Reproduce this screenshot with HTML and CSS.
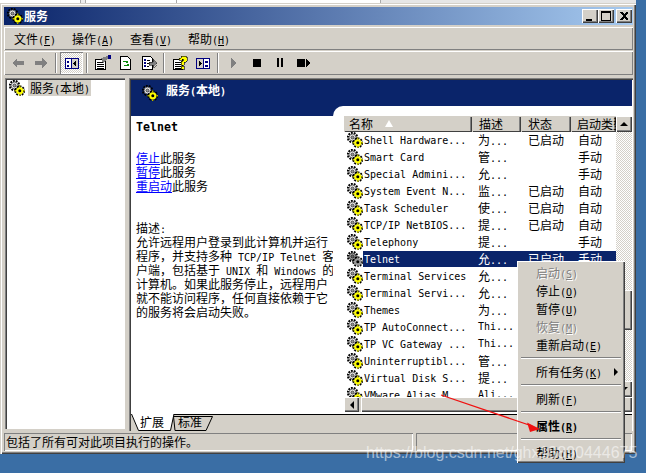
FILE: index.html
```html
<!DOCTYPE html>
<html>
<head>
<meta charset="utf-8"/>
<title>服务</title>
<link rel="stylesheet" href="styles.css">
</head>
<body>

<svg class="defs" width="0" height="0">
  <symbol id="svc" viewBox="0 0 16 16">
    <circle cx="5.5" cy="5.5" r="4.6" fill="none" stroke="#000" stroke-width="2.200" stroke-dasharray="1.800 1"/>
    <circle cx="5.5" cy="5.5" r="3.4" fill="#fff" stroke="#444" stroke-width=".8"/>
    <circle cx="5.5" cy="5.5" r="1.6" fill="#9a9a9a" stroke="#000" stroke-width=".6"/>
    <circle cx="10.8" cy="10.8" r="4.3" fill="none" stroke="#000" stroke-width="2.200" stroke-dasharray="1.800 1"/>
    <circle cx="10.8" cy="10.8" r="3.6" fill="#ff0"/>
    <circle cx="10.8" cy="10.8" r="1.5" fill="#000"/>
    <path d="M10.800 5.500v1.500M10.800 14.500v1.500M5.500 10.800h1.500M14.500 10.800h1.500" stroke="#ff0" stroke-width="1"/>
  </symbol>
</svg>

<div class="strip"></div>

<div class="window">
  <div class="titlebar">
    <svg class="ico"><use href="#svc"/></svg>
    <b class="title-text">服务</b>
    <div class="winbtns">
      <span class="winbtn raised"><svg width="16" height="14" shape-rendering="crispEdges"><rect x="4" y="10" width="6" height="2"/></svg></span>
      <span class="winbtn raised"><svg width="16" height="14" shape-rendering="crispEdges"><path d="M3 2h10v10H3z M4 4v7h8V4z" fill-rule="evenodd"/></svg></span>
      <span class="winbtn close raised"><svg width="16" height="14" shape-rendering="crispEdges"><path d="M4 3h2l2 2 2-2h2v1l-3 3 3 3v1h-2l-2-2-2 2H4v-1l3-3-3-3z"/></svg></span>
    </div>
  </div>

  <div class="menubar bar">
    <span class="menu-item">文件<span class="en">(<u>F</u>)</span></span>
    <span class="menu-item">操作<span class="en">(<u>A</u>)</span></span>
    <span class="menu-item">查看<span class="en">(<u>V</u>)</span></span>
    <span class="menu-item">帮助<span class="en">(<u>H</u>)</span></span>
  </div>

  <div class="toolbar bar">
    <span class="tool"><svg width="16" height="16" shape-rendering="crispEdges"><path d="M2 8l5-5v3h7v4H7v3z" fill="#808080"/></svg></span>
    <span class="tool"><svg width="16" height="16" shape-rendering="crispEdges"><path d="M14 8L9 3v3H2v4h7v3z" fill="#808080"/></svg></span>
    <span class="tool-sep"></span>
    <span class="tool on"><svg width="16" height="16" shape-rendering="crispEdges"><rect x="1.5" y="3.5" width="13" height="10" fill="#d4d0c8" stroke="#000080"/><rect x="2" y="4" width="5" height="9" fill="#fff"/><rect x="7" y="3" width="1" height="10" fill="#000080"/><path d="M3 6h2v2H3zM3 10h2v2H3z" fill="#000080"/><path d="M12 5v7L9 8.5z"/></svg></span>
    <span class="tool-sep"></span>
    <span class="tool"><svg width="18" height="16" shape-rendering="crispEdges"><path d="M1.500 4.500h10v10h-10z" fill="#fff" stroke="#000"/><path d="M3 7h7M3 9h7M3 11h7M3 13h7" stroke="#000"/><path d="M7 3l7-2v3l-5 4z" fill="#808080"/><rect x="14" y="0" width="3" height="4" fill="#000080"/></svg></span>
    <span class="tool"><svg width="16" height="16" shape-rendering="crispEdges"><path d="M2.5 1.5h7l3 3v10h-10z" fill="#fff" stroke="#000"/><path d="M5 6h5v2H8L7 7H5zM6 11h5V9H9l-1 1H6z" fill="#0a8a0a"/></svg></span>
    <span class="tool"><svg width="16" height="16" shape-rendering="crispEdges"><path d="M1.500 1.500h8l2 2v11h-10z" fill="#fff" stroke="#000"/><path d="M3 4h2v2H3zM3 7h2v2H3zM3 10h2v2H3z" fill="#000080"/><path d="M6 5h3M6 8h2M6 11h2" stroke="#000"/><path d="M8 7h4V4l4 4.500-4 4.500v-3H8z" fill="#808080" stroke="#000" stroke-width=".5"/></svg></span>
    <span class="tool-sep"></span>
    <span class="tool"><svg width="16" height="16" shape-rendering="crispEdges"><path d="M1.500 4.500h9v10h-9z" fill="#fff" stroke="#000"/><path d="M3 7h6M3 9h6M3 11h6M3 13h6" stroke="#000"/><path d="M7 3h2V1h5v1h1v4h-1v1h-2v3H9V6h2V4h-1v1H7z" fill="#ff0" stroke="#000" stroke-width=".6"/><rect x="9" y="11" width="3" height="3" fill="#ff0" stroke="#000" stroke-width=".6"/></svg></span>
    <span class="tool"><svg width="16" height="16" shape-rendering="crispEdges"><rect x="1.500" y="3.500" width="13" height="10" fill="#fff" stroke="#000080"/><rect x="2" y="4" width="6" height="9" fill="#d4d0c8"/><rect x="8" y="3" width="1" height="10" fill="#000080"/><path d="M4 5v7l3-3.500z"/><path d="M10 6h3v2h-3zM10 10h3v2h-3z" fill="#000080"/></svg></span>
    <span class="tool-sep"></span>
    <span class="tool"><svg width="16" height="16" shape-rendering="crispEdges"><path d="M5 3l6 5-6 5z" fill="#808080"/></svg></span>
    <span class="tool"><svg width="16" height="16" shape-rendering="crispEdges"><rect x="4" y="4" width="8" height="8"/></svg></span>
    <span class="tool"><svg width="16" height="16" shape-rendering="crispEdges"><path d="M5 3h2v9H5zM9 3h2v9H9z"/></svg></span>
    <span class="tool"><svg width="16" height="16" shape-rendering="crispEdges"><path d="M2 4h8v8H2zM11 4l4 4-4 4z"/></svg></span>
  </div>

  <div class="panes">
    <div class="tree sunken">
      <svg class="ico"><use href="#svc"/></svg>
      <span class="tree-label">服务<span class="en">(</span>本地<span class="en">)</span></span>
    </div>

    <div class="main sunken">
      <div class="ext-head">
        <svg class="ico"><use href="#svc"/></svg>
        <b>服务<span class="en">(</span>本地<span class="en">)</span></b>
      </div>
      <div class="ext-body">
        <div class="details">
          <div class="notch"></div>
          <div class="svc-name">Telnet</div>
          <div class="actions">
            <div><a>停止</a>此服务</div>
            <div><a>暂停</a>此服务</div>
            <div><a>重启动</a>此服务</div>
          </div>
          <div class="desc">
            描述<span class="en">:</span><br>
            允许远程用户登录到此计算机并运行<br>
            程序，并支持多种<span class="en"> TCP/IP Telnet </span>客<br>
            户端，包括基于<span class="en"> UNIX </span>和<span class="en"> Windows </span>的<br>
            计算机。如果此服务停止，远程用户<br>
            就不能访问程序，任何直接依赖于它<br>
            的服务将会启动失败。
          </div>
        </div>

        <div class="listwrap">
          <div class="listinner">
            <div class="list">
              <div class="listmain">
                <div class="head">
                  <span class="h h-name raised">名称<i class="sort"></i></span>
                  <span class="h h-desc raised">描述</span>
                  <span class="h h-stat raised">状态</span>
                  <span class="h h-start raised">启动类型</span>
                </div>
                <div class="row"><svg class="ico"><use href="#svc"/></svg><div class="cells"><span class="c-name">Shell Hardware...</span><span class="c-desc">为<span class="en">...</span></span><span class="c-stat">已启动</span><span class="c-start">自动</span></div></div>
                <div class="row"><svg class="ico"><use href="#svc"/></svg><div class="cells"><span class="c-name">Smart Card</span><span class="c-desc">管<span class="en">...</span></span><span class="c-stat"></span><span class="c-start">手动</span></div></div>
                <div class="row"><svg class="ico"><use href="#svc"/></svg><div class="cells"><span class="c-name">Special Admini...</span><span class="c-desc">允<span class="en">...</span></span><span class="c-stat"></span><span class="c-start">手动</span></div></div>
                <div class="row"><svg class="ico"><use href="#svc"/></svg><div class="cells"><span class="c-name">System Event N...</span><span class="c-desc">监<span class="en">...</span></span><span class="c-stat">已启动</span><span class="c-start">自动</span></div></div>
                <div class="row"><svg class="ico"><use href="#svc"/></svg><div class="cells"><span class="c-name">Task Scheduler</span><span class="c-desc">使<span class="en">...</span></span><span class="c-stat">已启动</span><span class="c-start">自动</span></div></div>
                <div class="row"><svg class="ico"><use href="#svc"/></svg><div class="cells"><span class="c-name">TCP/IP NetBIOS...</span><span class="c-desc">提<span class="en">...</span></span><span class="c-stat">已启动</span><span class="c-start">自动</span></div></div>
                <div class="row"><svg class="ico"><use href="#svc"/></svg><div class="cells"><span class="c-name">Telephony</span><span class="c-desc">提<span class="en">...</span></span><span class="c-stat"></span><span class="c-start">手动</span></div></div>
                <div class="row sel"><svg class="ico"><use href="#svc"/></svg><div class="cells"><span class="c-name">Telnet</span><span class="c-desc">允<span class="en">...</span></span><span class="c-stat">已启动</span><span class="c-start">手动</span></div></div>
                <div class="row"><svg class="ico"><use href="#svc"/></svg><div class="cells"><span class="c-name">Terminal Services</span><span class="c-desc">允<span class="en">...</span></span><span class="c-stat"></span><span class="c-start"></span></div></div>
                <div class="row"><svg class="ico"><use href="#svc"/></svg><div class="cells"><span class="c-name">Terminal Servi...</span><span class="c-desc">允<span class="en">...</span></span><span class="c-stat"></span><span class="c-start"></span></div></div>
                <div class="row"><svg class="ico"><use href="#svc"/></svg><div class="cells"><span class="c-name">Themes</span><span class="c-desc">为<span class="en">...</span></span><span class="c-stat"></span><span class="c-start"></span></div></div>
                <div class="row"><svg class="ico"><use href="#svc"/></svg><div class="cells"><span class="c-name">TP AutoConnect...</span><span class="c-desc en">Thi...</span><span class="c-stat"></span><span class="c-start"></span></div></div>
                <div class="row"><svg class="ico"><use href="#svc"/></svg><div class="cells"><span class="c-name">TP VC Gateway ...</span><span class="c-desc en">Thi...</span><span class="c-stat"></span><span class="c-start"></span></div></div>
                <div class="row"><svg class="ico"><use href="#svc"/></svg><div class="cells"><span class="c-name">Uninterruptibl...</span><span class="c-desc">管<span class="en">...</span></span><span class="c-stat"></span><span class="c-start"></span></div></div>
                <div class="row"><svg class="ico"><use href="#svc"/></svg><div class="cells"><span class="c-name">Virtual Disk S...</span><span class="c-desc">提<span class="en">...</span></span><span class="c-stat"></span><span class="c-start"></span></div></div>
                <div class="row"><svg class="ico"><use href="#svc"/></svg><div class="cells"><span class="c-name">VMware Alias M...</span><span class="c-desc en">Ali...</span><span class="c-stat"></span><span class="c-start"></span></div></div>
              </div>
              <div class="vscroll">
                <span class="sbtn raised"><i class="tri-up"></i></span>
                <span class="track t1"></span>
                <span class="thumb raised"></span>
                <span class="track"></span>
                <span class="sbtn raised"><i class="tri-down"></i></span>
              </div>
              <div class="hscroll">
                <span class="sbtn raised"><i class="tri-left"></i></span>
                <span class="hthumb raised"></span>
              </div>
            </div>
          </div>
        </div>
      </div>
      <div class="tabs">
        <svg class="tabshape" width="90" height="17" font-family="Noto Sans CJK SC" font-size="12">
          <path d="M42.500 2.500H81.500L75 16.500H44z" fill="#d4d0c8" stroke="#000"/>
          <path d="M0 0L7.500 16.500H39.500L43 0z" fill="#fff"/>
          <path d="M.5 0L7.500 16.500H39.500L43 0" fill="none" stroke="#000"/>
          <text x="9" y="12.500">扩展</text>
          <text x="47" y="12.500">标准</text>
        </svg>
      </div>
    </div>
  </div>

  <div class="statusbar">
    <span class="st st-main">包括了所有可对此项目执行的操作。</span>
    <span class="st st-rest"></span>
  </div>
</div>

<div class="ctx">
  <div class="mi off">启动<span class="en">(<u>S</u>)</span></div>
  <div class="mi">停止<span class="en">(<u>O</u>)</span></div>
  <div class="mi">暂停<span class="en">(<u>U</u>)</span></div>
  <div class="mi off">恢复<span class="en">(<u>M</u>)</span></div>
  <div class="mi">重新启动<span class="en">(<u>E</u>)</span></div>
  <div class="msep"></div>
  <div class="mi">所有任务<span class="en">(<u>K</u>)</span><i class="tri-right"></i></div>
  <div class="msep"></div>
  <div class="mi">刷新<span class="en">(<u>F</u>)</span></div>
  <div class="msep"></div>
  <div class="mi strong">属性<span class="en">(<u>R</u>)</span></div>
  <div class="msep"></div>
  <div class="mi">帮助<span class="en">(<u>H</u>)</span></div>
</div>

<svg class="callout" width="110" height="40">
  <path d="M1 1L92 32" stroke="#f01010" stroke-width="1.200" fill="none"/>
  <path d="M100 35L87 28.500L90 38z" fill="#f01010"/>
</svg>

<div class="watermark">https://blog.csdn.net/ghx18890444675</div>

</body>
</html>
```

FILE: styles.css
```css
html, body {
  margin: 0;
  height: 473px;
  overflow: hidden;
}

body {
  background-color: #3a6ea5;
  font-family: "Noto Sans CJK SC", sans-serif;
  font-size: 12px;
  line-height: 14px;
  color: #000;
  position: relative;
}

.defs {
  display: block;
  height: 0;
}

.en {
  font-family: "DejaVu Sans Mono", monospace;
  font-size: 10px;
  line-height: 1;
}

.ico {
  width: 16px;
  height: 16px;
  flex: none;
}

.raised {
  background-color: #d4d0c8;
  box-shadow: inset 1px 1px 0 #fff, inset -1px -1px 0 #404040, inset -2px -2px 0 #808080;
}

.sunken {
  box-shadow: inset 1px 1px 0 #808080, inset 2px 2px 0 #404040, inset -1px -1px 0 #fff;
}

.strip {
  width: 636px;
  height: 3px;
  background: linear-gradient(90deg, #fff 80px, #aaa 80px, #aaa 81px, #eee 81px, #eee 85px, #aaa 85px, #aaa 86px, #fff 86px, #fff 176px, #aaa 176px, #aaa 177px, #fff 177px, #fff 380px, #aaa 380px, #aaa 381px, #e6e6e6 381px);
}

.window {
  width: 636px;
  height: 451px;
  box-sizing: border-box;
  padding: 4px 3px 3px 4px;
  background-color: #d4d0c8;
  box-shadow: inset 1px 1px 0 #d4d0c8, inset 2px 2px 0 #fff, inset -1px -1px 0 #404040, inset -2px -2px 0 #808080;
  display: flex;
  flex-direction: column;
}

/* title bar */
.titlebar {
  height: 18px;
  flex: none;
  display: flex;
  align-items: center;
  padding-left: 3px;
  background: linear-gradient(90deg, #0a246a, #a6caf0);
  color: #fff;
}

.title-text {
  margin-left: 1px;
}

.winbtns {
  margin-left: auto;
  margin-right: 1px;
  display: flex;
}

.winbtn {
  display: block;
  width: 16px;
  height: 14px;
}

.winbtn svg {
  display: block;
}

.close {
  margin-left: 2px;
}

/* menu and toolbar */
.bar {
  flex: none;
  display: flex;
  align-items: center;
  box-shadow: inset 1px 1px 0 #fff, inset -1px -1px 0 #808080;
}

.menubar {
  height: 23px;
  margin-top: 2px;
  padding-left: 10px;
}

.menu-item {
  width: 58px;
}

.toolbar {
  height: 24px;
  margin-top: 1px;
  padding-left: 2px;
}

.tool {
  width: 23px;
  height: 22px;
  display: flex;
  align-items: center;
  justify-content: center;
}

.tool svg {
  display: block;
}

.tool.on {
  background: repeating-conic-gradient(#fff 0 25%, #d4d0c8 0 50%) 0 0 / 2px 2px;
  box-shadow: inset 1px 1px 0 #808080, inset -1px -1px 0 #fff;
}

.tool-sep {
  width: 8px;
  height: 20px;
  background: linear-gradient(90deg, transparent 3px, #808080 3px, #808080 4px, #fff 4px, #fff 5px, transparent 5px);
}

/* panes */
.panes {
  flex: 1;
  min-height: 0;
  margin-top: 3px;
  display: flex;
  gap: 4px;
}

.tree {
  width: 120px;
  margin-left: 1px;
  height: 351px;
  box-sizing: border-box;
  padding: 2px 0 0 4px;
  background-color: #fff;
  display: flex;
  align-items: flex-start;
}

.tree-label {
  margin-left: 3px;
  padding: 1px 1px 1px 2px;
  background-color: #d4d0c8;
  white-space: nowrap;
}

.main {
  flex: 1;
  min-width: 0;
  box-sizing: border-box;
  padding: 2px 1px 0 2px;
  display: flex;
  flex-direction: column;
}

.ext-head {
  height: 26px;
  flex: none;
  box-sizing: border-box;
  padding: 3px 0 0 11px;
  background-color: #0a246a;
  color: #fff;
  display: flex;
  align-items: flex-start;
  gap: 8px;
}

.ext-head .ico {
  margin-top: 2px;
}

.ext-body {
  flex: 1;
  min-height: 0;
  display: flex;
  background-color: #fff;
}

.details {
  width: 202px;
  flex: none;
}

.notch {
  height: 10px;
  background-color: #0a246a;
}

.svc-name {
  margin: 4px 0 0 5px;
  font-family: "DejaVu Sans Mono", monospace;
  font-size: 11.600px;
  font-weight: 700;
}

.actions {
  margin: 17px 0 0 5px;
}

.actions a {
  color: #0000ff;
  text-decoration: underline;
}

.desc {
  margin: 28px 0 0 5px;
  white-space: nowrap;
}

.listwrap {
  flex: 1;
  min-width: 0;
  background-color: #0a246a;
}

.listinner {
  height: 100%;
  box-sizing: border-box;
  padding: 10px 0 2px 11px;
  background-color: #fff;
  border-top-left-radius: 10px;
}

.list {
  height: 100%;
  display: grid;
  grid-template-columns: 1fr 16px;
  grid-template-rows: 1fr 15px;
  min-height: 0;
}

.listmain {
  overflow: hidden;
  min-height: 0;
}

.head {
  height: 16px;
  display: flex;
}

.h {
  height: 16px;
  box-sizing: border-box;
  padding: 1px 0 0 5px;
  overflow: hidden;
  white-space: nowrap;
  box-shadow: inset 1px 1px 0 #d4d0c8, inset -1px -1px 0 #404040, inset -2px 0 0 #808080;
}

.h-name { width: 128px; position: relative; }
.h-desc { width: 49px; padding-left: 7px; }
.h-stat { width: 50px; padding-left: 7px; }
.h-start { width: 45px; padding-left: 6px; }

.sort {
  position: absolute;
  left: 41px;
  top: 4px;
  width: 0;
  height: 0;
  border-left: 4px solid transparent;
  border-right: 4px solid transparent;
  border-bottom: 7px solid #fff;
}

.row {
  height: 17px;
  display: flex;
  padding-left: 3px;
}

.cells {
  flex: 1;
  height: 16px;
  display: flex;
  align-items: center;
  white-space: nowrap;
}

.sel .cells {
  background-color: #0a246a;
  color: #fff;
}

.sel .ico {
  filter: grayscale(1) brightness(.65);
}

.c-name {
  width: 109px;
  padding: 1px 0 0 1px;
  box-sizing: border-box;
  font-family: "DejaVu Sans Mono", monospace;
  font-size: 10px;
}

.c-desc { width: 49px; padding-left: 6px; box-sizing: border-box; }
.c-stat { width: 50px; padding-left: 7px; box-sizing: border-box; }
.c-start { width: 44px; padding-left: 7px; box-sizing: border-box; }

/* scrollbars */
.vscroll {
  display: flex;
  flex-direction: column;
  min-height: 0;
}

.sbtn {
  flex: none;
  width: 16px;
  height: 16px;
  display: flex;
  align-items: center;
  justify-content: center;
}

.track {
  flex: 1;
  background: repeating-conic-gradient(#fff 0 25%, #d4d0c8 0 50%) 0 0 / 2px 2px;
}

.t1 {
  flex: none;
  height: 158px;
}

.thumb {
  flex: none;
  height: 40px;
}

.hscroll {
  grid-column: 1 / 3;
  display: flex;
  gap: 2px;
  background-color: #d4d0c8;
}

.hscroll .sbtn {
  height: 15px;
  width: 15px;
}

.hthumb {
  flex: 1;
}

.tri-up, .tri-down, .tri-left, .tri-right {
  display: block;
  width: 0;
  height: 0;
  border-style: solid;
  border-color: transparent;
}

.tri-up { border-width: 0 4px 4px; border-bottom-color: #000; }
.tri-down { border-width: 4px 4px 0; border-top-color: #000; }
.tri-left { border-width: 4px 4px 4px 0; border-right-color: #000; }
.tri-right { border-width: 4px 0 4px 4px; border-left-color: #000; }

/* tabs */
.tabs {
  height: 17px;
  flex: none;
  background-color: #d4d0c8;
  box-shadow: inset 0 1px 0 #000;
}

.tabshape {
  display: block;
}

/* status bar */
.statusbar {
  height: 18px;
  margin-top: 2px;
  flex: none;
  display: flex;
  gap: 3px;
  box-sizing: border-box;
  padding-right: 1px;
}

.st {
  display: block;
  box-sizing: border-box;
  padding: 2px 0 0 2px;
  box-shadow: inset 1px 1px 0 #808080, inset -1px -1px 0 #fff;
}

.st-main {
  width: 409px;
}

.st-rest {
  flex: 1;
}

/* context menu, over the list */
.ctx {
  position: absolute;
  left: 517px;
  top: 261px;
  width: 108px;
  height: 202px;
  box-sizing: border-box;
  padding: 3px 3px 0;
  background-color: #d4d0c8;
  box-shadow: inset 1px 1px 0 #fff, inset -1px -1px 0 #404040, inset -2px -2px 0 #808080;
}

.mi {
  height: 18px;
  line-height: 17px;
  padding-left: 16px;
  white-space: nowrap;
  position: relative;
}

.mi.off {
  color: #808080;
  text-shadow: 1px 1px 0 #fff;
}

.mi.strong {
  font-weight: 700;
}

.mi .tri-right {
  position: absolute;
  right: 4px;
  top: 5px;
}

.msep {
  height: 9px;
  box-sizing: border-box;
  margin: 0 1px;
  padding-top: 3px;
}

.msep::before {
  content: "";
  display: block;
  height: 1px;
  background-color: #808080;
  box-shadow: 0 1px 0 #fff;
}

.callout {
  position: absolute;
  left: 440px;
  top: 394px;
}

.watermark {
  position: absolute;
  left: 366px;
  top: 443px;
  font-family: "Liberation Sans", sans-serif;
  font-size: 16px;
  line-height: 20px;
  color: rgba(255, 255, 255, .55);
  white-space: nowrap;
}
```
